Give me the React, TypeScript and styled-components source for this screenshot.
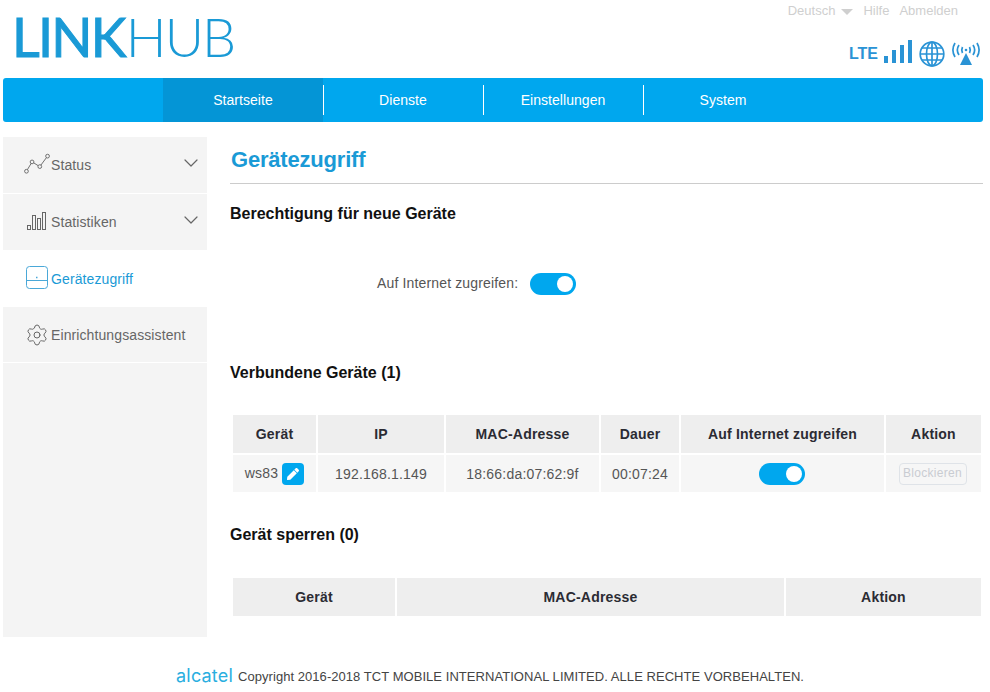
import styled, { createGlobalStyle } from "styled-components";
import { ChevronDown, Settings } from "lucide-react";
import { FaPen } from "react-icons/fa";

const GlobalStyle = createGlobalStyle`
  html, body {
    margin: 0;
    padding: 0;
    background: #fff;
    font-family: "Liberation Sans", Arial, sans-serif;
  }
`;

const BLUE = "#00a7ee";
const TEXT_BLUE = "#1a9ad6";
const ICON_BLUE = "#2a93d5";

const Page = styled.div`
  width: 980px;
  margin-left: 3px;
  height: 692px;
  display: flex;
  flex-direction: column;
`;

const Header = styled.header`
  height: 78px;
  display: flex;
  justify-content: space-between;
`;

const Logo = styled.div`
  margin: 10px 0 0 9px;
  font-family: "Lato", sans-serif;
  font-size: 54px;
  line-height: 54px;
  letter-spacing: -1.8px;
  color: ${TEXT_BLUE};
  font-weight: 400;
  b {
    font-weight: 400;
    -webkit-text-stroke: 1px ${TEXT_BLUE};
  }
  span {
    font-weight: 300;
    margin-left: 1px;
  }
`;

const HeaderRight = styled.div`
  display: flex;
  flex-direction: column;
  align-items: flex-end;
`;

const TopLinks = styled.div`
  display: flex;
  align-items: center;
  margin: 3px 25px 0 0;
  height: 15px;
  font-size: 13px;
  color: #cfcfcf;
`;

const Caret = styled.i`
  width: 0;
  height: 0;
  margin: 2px 10px 0 6px;
  border-left: 6px solid transparent;
  border-right: 6px solid transparent;
  border-top: 6px solid #cfcfcf;
`;

const TopLink = styled.span<{ $gap?: number }>`
  margin-left: ${({ $gap }) => $gap ?? 0}px;
`;

const StatusIcons = styled.div`
  display: flex;
  align-items: flex-start;
  gap: 6px;
  margin: 22px 2px 0 0;
  color: ${ICON_BLUE};
`;

const StatusSlot = styled.span<{ $top: number }>`
  display: block;
  margin-top: ${({ $top }) => $top}px;
`;

const Lte = styled.span`
  display: block;
  margin-top: 5px;
  font-size: 16px;
  font-weight: bold;
`;

const Nav = styled.nav`
  height: 44px;
  background: ${BLUE};
  border-radius: 3px;
  display: flex;
  padding-left: 160px;
`;

const NavItem = styled.div<{ $active?: boolean; $last?: boolean }>`
  width: 160px;
  height: 44px;
  display: flex;
  align-items: center;
  justify-content: center;
  color: #fff;
  font-size: 14px;
  letter-spacing: 0.05px;
  background: ${({ $active }) => ($active ? "#0495d6" : "transparent")};
  position: relative;
  &::after {
    content: "";
    position: absolute;
    right: -1px;
    top: 7px;
    bottom: 7px;
    width: 1px;
    background: ${({ $last }) => ($last ? "transparent" : "#fff")};
  }
`;

const Body = styled.div`
  display: flex;
  margin-top: 15px;
`;

const Sidebar = styled.aside`
  width: 204px;
  height: 500px;
  background: #f4f4f4;
  flex-shrink: 0;
`;

const SideItem = styled.div<{ $active?: boolean }>`
  box-sizing: border-box;
  height: 56px;
  margin-top: ${({ $active }) => ($active ? "-1px" : "0")};
  margin-bottom: 1px;
  display: flex;
  align-items: center;
  position: relative;
  padding: ${({ $active }) => ($active ? "2px" : "0")} 0 0 48px;
  background: ${({ $active }) => ($active ? "#fff" : "#f4f4f4")};
  color: ${({ $active }) => ($active ? TEXT_BLUE : "#666")};
  font-size: 14px;
  letter-spacing: 0.1px;
  box-shadow: 0 1px 0 #fff;
  &:last-child {
    height: 55px;
  }
`;

const SideIcon = styled.span`
  width: 28px;
  height: 28px;
  margin-left: -28px;
  display: flex;
  align-items: center;
  justify-content: center;
`;

const Chevron = styled(ChevronDown)`
  position: absolute;
  right: 4px;
  top: 14px;
  color: #666;
`;

const Content = styled.main`
  flex: 1;
  min-width: 0;
  margin-left: 23px;
`;

const Title = styled.h1`
  margin: 0;
  height: 46px;
  padding-left: 1px;
  line-height: 45px;
  font-size: 22px;
  font-weight: bold;
  letter-spacing: -0.2px;
  color: ${TEXT_BLUE};
  border-bottom: 1px solid #ccc;
`;

const SectionTitle = styled.h2<{ $top: number }>`
  margin: ${({ $top }) => $top}px 0 0;
  font-size: 16px;
  line-height: 20px;
  font-weight: bold;
  color: #111;
`;

const AccessRow = styled.div`
  display: flex;
  align-items: center;
  margin: 49px 0 0 147px;
  height: 22px;
  gap: 12px;
  font-size: 14px;
  letter-spacing: 0.15px;
  color: #555;
`;

const AccessLabel = styled.span`
  margin-top: -2px;
`;

const Toggle = styled.span`
  display: block;
  width: 46px;
  height: 22px;
  border-radius: 11px;
  background: ${BLUE};
  position: relative;
  &::after {
    content: "";
    position: absolute;
    right: 3px;
    top: 3px;
    width: 16px;
    height: 16px;
    border-radius: 50%;
    background: #fff;
  }
`;

const Table = styled.table<{ $top: number }>`
  border-collapse: separate;
  border-spacing: 2px;
  table-layout: fixed;
  width: 752px;
  margin: ${({ $top }) => $top}px 0 0 1px;
  text-align: center;
  th {
    height: 38px;
    padding: 0;
    background: #eeeeee;
    font-size: 14px;
    font-weight: bold;
    color: #2b2b33;
    letter-spacing: 0.2px;
  }
  td {
    height: 37px;
    padding: 0;
    background: #f6f6f6;
    font-size: 14px;
    color: #555;
    letter-spacing: 0.2px;
  }
`;

const EditButton = styled.span`
  display: inline-flex;
  align-items: center;
  justify-content: center;
  width: 22px;
  height: 22px;
  border-radius: 4px;
  margin-left: 4px;
  vertical-align: middle;
  background: ${BLUE};
  color: #fff;
`;

const CenterToggle = styled.div`
  display: flex;
  justify-content: center;
  padding-right: 2px;
`;

const BlockButton = styled.span`
  display: inline-block;
  width: 66px;
  height: 20px;
  line-height: 19px;
  margin-right: 2px;
  border: 1px solid #dfe3e8;
  border-radius: 4px;
  font-size: 12px;
  color: #c9ccd2;
  letter-spacing: 0.3px;
  box-sizing: content-box;
`;

const Footer = styled.footer`
  display: flex;
  justify-content: center;
  align-items: center;
  margin-top: 29px;
  padding-right: 6px;
  font-size: 13px;
  letter-spacing: 0.05px;
  color: #444;
  gap: 5px;
`;

const FooterLogo = styled.span`
  font-family: "Inter", sans-serif;
  font-size: 18px;
  font-weight: 400;
  line-height: 20px;
  letter-spacing: 0.2px;
  color: #29aee0;
`;

const StatusLineIcon = () => (
  <svg width="30" height="24" viewBox="0 0 30 24" fill="none" stroke="#666" strokeWidth="1">
    <circle cx="3.7" cy="18.7" r="2" />
    <circle cx="9.7" cy="8.7" r="2" />
    <circle cx="18" cy="13.7" r="2" />
    <circle cx="26.3" cy="2.5" r="2" />
    <path d="M4.7 17 L8.7 10.4 M11.5 9.7 L16.2 12.7 M19.2 12.1 L25.1 4.1" />
  </svg>
);

const BarsIcon = () => (
  <svg width="24" height="24" viewBox="0 0 24 24" fill="none" stroke="#666" strokeWidth="1">
    <rect x="2.5" y="15.5" width="3" height="4" />
    <rect x="7.5" y="5.5" width="3" height="14" />
    <rect x="12.5" y="8.5" width="3" height="11" />
    <rect x="17.5" y="2.5" width="3" height="17" />
  </svg>
);

const DeviceIcon = () => (
  <svg width="26" height="26" viewBox="0 0 26 26" fill="none" stroke="#4aa8d8" strokeWidth="1">
    <rect x="2.5" y="0.5" width="21" height="22" rx="3" />
    <path d="M2.5 14.5 H23.5" />
    <path d="M12 11.5 h1.5" strokeWidth="1.5" />
  </svg>
);

const SignalIcon = () => (
  <svg width="29" height="23" viewBox="0 0 29 23" fill={ICON_BLUE}>
    <rect x="0" y="16" width="4" height="7" />
    <rect x="8" y="10" width="4" height="13" />
    <rect x="16" y="5" width="4" height="18" />
    <rect x="24" y="0" width="4" height="23" />
  </svg>
);

const GlobeIcon = () => (
  <svg width="26" height="26" viewBox="0 0 26 26" fill="none" stroke={ICON_BLUE} strokeWidth="1.7">
    <circle cx="13" cy="13" r="11.8" />
    <ellipse cx="13" cy="13" rx="5.5" ry="11.8" />
    <path d="M13 1 V25 M1.2 13 H24.8 M3 7 H23 M3 19 H23" />
  </svg>
);

const TowerIcon = () => (
  <svg width="30" height="24" viewBox="0 0 30 24" fill="none" stroke={ICON_BLUE} strokeWidth="1.7">
    <path d="M4 1 C1 6 1 10 4 15 M26 1 C29 6 29 10 26 15" />
    <path d="M8 3 C6 6 6 10 8 13 M22 3 C24 6 24 10 22 13" />
    <path d="M11.5 5 C10.5 7 10.5 9 11.5 11 M18.5 5 C19.5 7 19.5 9 18.5 11" />
    <circle cx="15" cy="8" r="1.3" fill={ICON_BLUE} stroke="none" />
    <path d="M15 11 L21 23 H9 Z" fill={ICON_BLUE} stroke="none" />
  </svg>
);

export default function App() {
  return (
    <>
      <GlobalStyle />
      <Page>
        <Header>
          <Logo>
            <b>LINK</b>
            <span>HUB</span>
          </Logo>
          <HeaderRight>
            <TopLinks>
              <span>Deutsch</span>
              <Caret />
              <TopLink>Hilfe</TopLink>
              <TopLink $gap={10}>Abmelden</TopLink>
            </TopLinks>
            <StatusIcons>
              <Lte>LTE</Lte>
              <StatusSlot $top={0}><SignalIcon /></StatusSlot>
              <StatusSlot $top={1}><GlobeIcon /></StatusSlot>
              <StatusSlot $top={2}><TowerIcon /></StatusSlot>
            </StatusIcons>
          </HeaderRight>
        </Header>

        <Nav>
          <NavItem $active>Startseite</NavItem>
          <NavItem>Dienste</NavItem>
          <NavItem>Einstellungen</NavItem>
          <NavItem $last>System</NavItem>
        </Nav>

        <Body>
          <Sidebar>
            <SideItem>
              <SideIcon><StatusLineIcon /></SideIcon>
              Status
              <Chevron size={24} strokeWidth={1.2} />
            </SideItem>
            <SideItem>
              <SideIcon><BarsIcon /></SideIcon>
              Statistiken
              <Chevron size={24} strokeWidth={1.2} />
            </SideItem>
            <SideItem $active>
              <SideIcon><DeviceIcon /></SideIcon>
              Gerätezugriff
            </SideItem>
            <SideItem>
              <SideIcon><Settings size={24} strokeWidth={1} color="#666" /></SideIcon>
              Einrichtungsassistent
            </SideItem>
          </Sidebar>

          <Content>
            <Title>Gerätezugriff</Title>
            <SectionTitle $top={20}>Berechtigung für neue Geräte</SectionTitle>
            <AccessRow>
              <AccessLabel>Auf Internet zugreifen:</AccessLabel>
              <Toggle />
            </AccessRow>
            <SectionTitle $top={68}>Verbundene Geräte (1)</SectionTitle>
            <Table $top={30}>
              <colgroup>
                <col width="83" />
                <col width="126" />
                <col width="153" />
                <col width="78" />
                <col width="203" />
                <col width="95" />
              </colgroup>
              <thead>
                <tr>
                  <th>Gerät</th>
                  <th>IP</th>
                  <th>MAC-Adresse</th>
                  <th>Dauer</th>
                  <th>Auf Internet zugreifen</th>
                  <th>Aktion</th>
                </tr>
              </thead>
              <tbody>
                <tr>
                  <td>
                    ws83
                    <EditButton><FaPen size={12} /></EditButton>
                  </td>
                  <td>192.168.1.149</td>
                  <td>18:66:da:07:62:9f</td>
                  <td>00:07:24</td>
                  <td><CenterToggle><Toggle /></CenterToggle></td>
                  <td><BlockButton>Blockieren</BlockButton></td>
                </tr>
              </tbody>
            </Table>
            <SectionTitle $top={31}>Gerät sperren (0)</SectionTitle>
            <Table $top={31}>
              <colgroup>
                <col width="162" />
                <col width="387" />
                <col width="195" />
              </colgroup>
              <thead>
                <tr>
                  <th>Gerät</th>
                  <th>MAC-Adresse</th>
                  <th>Aktion</th>
                </tr>
              </thead>
            </Table>
          </Content>
        </Body>

        <Footer>
          <FooterLogo>alcatel</FooterLogo>
          Copyright 2016-2018 TCT MOBILE INTERNATIONAL LIMITED. ALLE RECHTE VORBEHALTEN.
        </Footer>
      </Page>
    </>
  );
}
